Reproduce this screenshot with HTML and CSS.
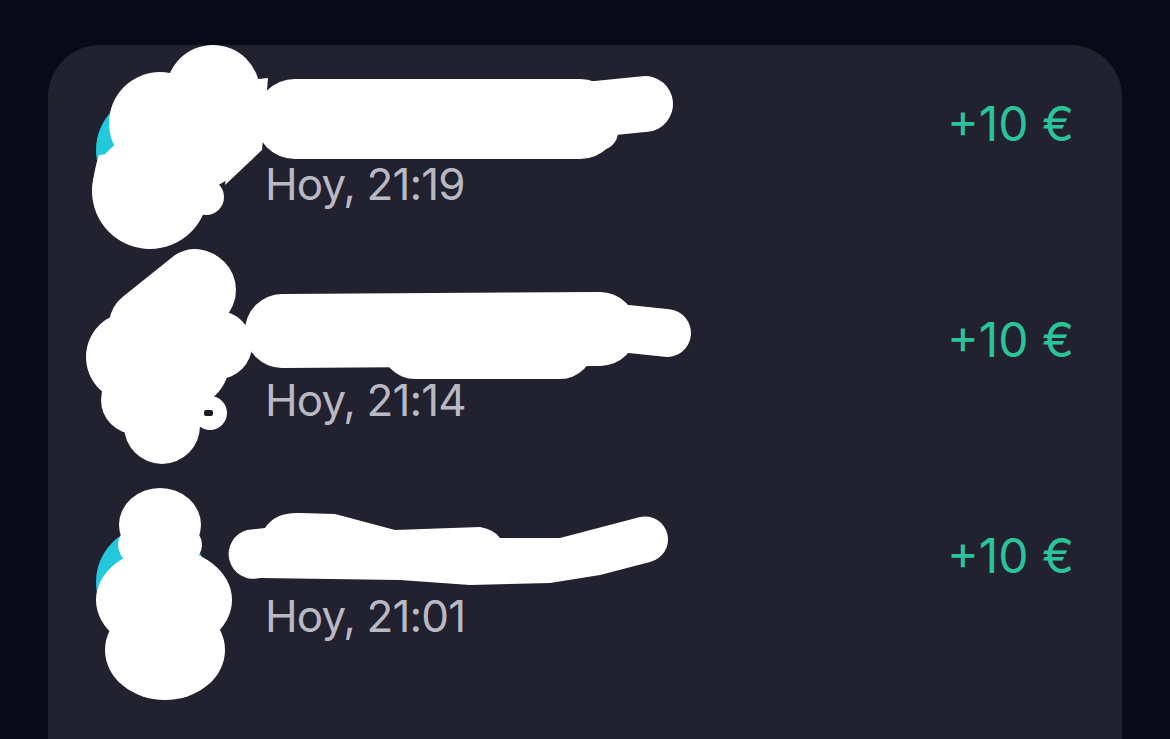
FILE: index.html
```html
<!DOCTYPE html>
<html lang="es">
<head>
<meta charset="utf-8">
<title>Movimientos</title>
<link rel="stylesheet" href="styles.css">
</head>
<body>
<main class="card">
  <div class="row">
    <div class="avatar"></div>
    <div class="info">
      <div class="title"></div>
      <div class="date">Hoy, 21:19</div>
    </div>
    <div class="amount">+10 €</div>
  </div>
  <div class="row">
    <div class="avatar"></div>
    <div class="info">
      <div class="title"></div>
      <div class="date">Hoy, 21:14</div>
    </div>
    <div class="amount">+10 €</div>
  </div>
  <div class="row">
    <div class="avatar"></div>
    <div class="info">
      <div class="title"></div>
      <div class="date">Hoy, 21:01</div>
    </div>
    <div class="amount">+10 €</div>
  </div>
</main>
<svg class="scribbles" width="1170" height="739" viewBox="0 0 1170 739" aria-hidden="true">
  <g fill="#fff" stroke="#fff" stroke-linecap="round" stroke-linejoin="round">
    <!-- row 1 -->
    <circle cx="213" cy="92" r="47" stroke="none"/>
    <circle cx="160" cy="123" r="51" stroke="none"/>
    <circle cx="150" cy="191" r="58" stroke="none"/>
    <circle cx="195" cy="135" r="55" stroke="none"/>
    <circle cx="206" cy="197" r="18" stroke="none"/>
    <path d="M99 155 Q93 172 92 195 L150 195 L150 150 Z" stroke="none"/>
    <path d="M240 82 Q255 79 268 78 L262 150 L225 185 Z" stroke="none"/>
    <path d="M295 119 L580 119" stroke-width="80" fill="none"/>
    <path d="M585 110 L645 104" stroke-width="56" fill="none"/>
    <path d="M560 140 L600 132" stroke-width="36" fill="none"/>
    <!-- row 2 -->
    <circle cx="196" cy="290" r="40" stroke="none"/>
    <path d="M145 325 L195 285" stroke-width="72" fill="none"/>
    <circle cx="131" cy="357" r="45" stroke="none"/>
    <circle cx="135" cy="400" r="34" stroke="none"/>
    <circle cx="162" cy="426" r="38" stroke="none"/>
    <circle cx="180" cy="360" r="50" stroke="none"/>
    <circle cx="218" cy="345" r="34" stroke="none"/>
    <circle cx="210" cy="413" r="17" stroke="none"/>
    <path d="M282 331 L600 329" stroke-width="74" fill="none"/>
    <path d="M415 345 L560 345" stroke-width="68" fill="none"/>
    <path d="M600 326 L667 333" stroke-width="48" fill="none"/>
    <!-- row 3 -->
    <ellipse cx="160" cy="525" rx="41" ry="37" stroke="none"/>
    <ellipse cx="160" cy="545" rx="42" ry="28" stroke="none"/>
    <ellipse cx="164" cy="600" rx="68" ry="52" stroke="none"/>
    <ellipse cx="165" cy="650" rx="60" ry="50" stroke="none"/>
    <path d="M247 530 L265 528 Q275 512 300 513 L335 514 Q365 522 395 530 L480 527 Q495 530 500 538 L560 538 L640 517 A23 23 0 0 1 650 562 L600 575 L550 583 L470 585 L400 580 L260 578 A24 24 0 0 1 247 530 Z" stroke="none"/>
  </g>
  <rect x="204" y="410" width="9" height="6" rx="2" fill="#1c1b24"/>
</svg>
</body>
</html>
```
FILE: styles.css
```css
html, body {
  margin: 0;
  padding: 0;
}
body {
  width: 1170px;
  height: 739px;
  overflow: hidden;
  background: #080a18;
  font-family: Inter, "Noto Sans", sans-serif;
  position: relative;
}
.card {
  margin: 45px 0 0 48px;
  width: 1074px;
  min-height: 760px;
  box-sizing: border-box;
  background: #22212f;
  border-radius: 52px 52px 0 0;
  padding: 49px 48px 0 48px;
  display: flex;
  flex-direction: column;
  gap: 104px;
}
.row {
  display: flex;
  align-items: flex-start;
  height: 112px;
}
.avatar {
  width: 112px;
  height: 112px;
  border-radius: 50%;
  background: #22c8dc;
  flex: none;
}
.info {
  margin-left: 57px;
  flex: 1;
  display: flex;
  flex-direction: column;
}
.title {
  height: 64px;
}
.date {
  font-size: 44px;
  line-height: 52px;
  color: #bab9c3;
  letter-spacing: -0.9px;
}
.amount {
  margin-top: 2px;
  font-size: 48px;
  line-height: 56px;
  color: #2bc49a;
  white-space: nowrap;
}
.scribbles {
  position: absolute;
  top: 0;
  left: 0;
  pointer-events: none;
}
```
